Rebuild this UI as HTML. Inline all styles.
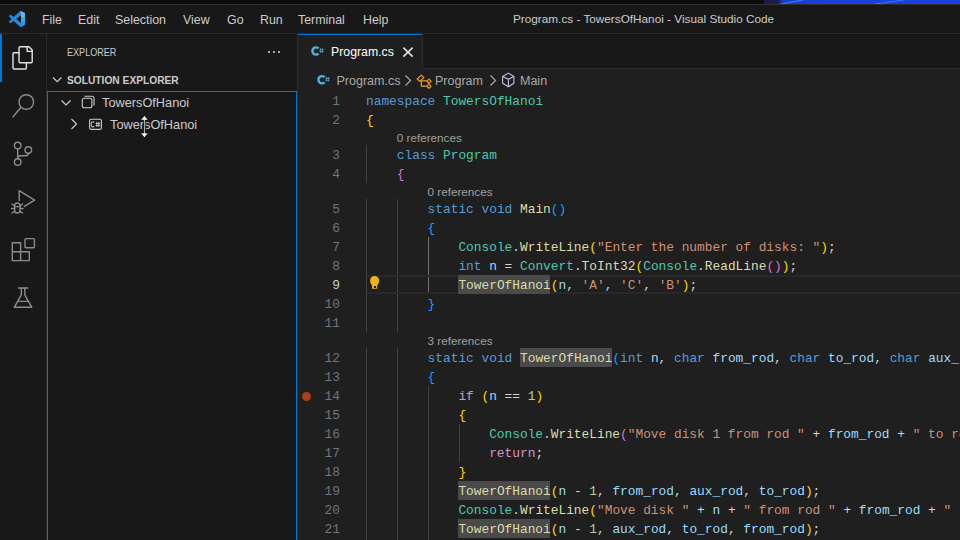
<!DOCTYPE html>
<html><head><meta charset="utf-8">
<style>
*{margin:0;padding:0;box-sizing:border-box}
html,body{width:960px;height:540px;overflow:hidden;background:#181818;font-family:"Liberation Sans",sans-serif}
.a{position:absolute}
.menu{top:13px;font-size:12.4px;color:#cccccc;white-space:pre;line-height:14px}
.code{font-family:"Liberation Mono",monospace;font-size:12.83px;white-space:pre;line-height:19px;height:19px;left:366px;color:#d4d4d4}
.ln{font-family:"Liberation Mono",monospace;font-size:12.83px;white-space:pre;line-height:19px;height:19px;left:300px;width:40px;text-align:right;color:#6e7681}
.ln.act{color:#cccccc}
.cl{font-size:11.7px;color:#a0a0a0;white-space:pre;line-height:16px;height:16px}
.k{color:#569cd6}.t{color:#4ec9b0}.f{color:#dcdcaa}.s{color:#ce9178}.v{color:#9cdcfe}.c{color:#cf98cb}.n{color:#b5cea8}
.b1{color:#ffd700}.b2{color:#da70d6}.b3{color:#179fff}
.hl{background:#4a4a4a}
.ig{width:1px;background:#404040}
.iga{width:1px;background:#707070}
.ui{font-size:12.5px;color:#a9a9a9;white-space:pre;line-height:16px}
</style></head><body>
<!-- desktop strip -->
<div class="a" style="left:0;top:0;width:960px;height:4px;background:#0b0d0b"></div>
<div class="a" style="left:764px;top:0;width:196px;height:4px;background:linear-gradient(90deg,#1c1c4a 0,#1c1c50 7%,#1b3cd8 10%,#1c40e0 100%)"></div>
<svg class="a" style="left:764px;top:0" width="196" height="4"><path d="M15 4 L36 0 L41 0 L20 4Z" fill="#3a8ee8"/><path d="M109 4 L137 0 L142 0 L114 4Z" fill="#3a8ee8"/></svg>
<div class="a" style="left:0;top:4px;width:960px;height:1px;background:#303030"></div>
<!-- title bar -->
<div class="a" style="left:0;top:33px;width:960px;height:1px;background:#2b2b2b"></div>
<svg class="a" style="left:9px;top:11px" width="16" height="16" viewBox="0 0 100 100">
<path d="M96.46 10.8 L75.86 0.9 C73.47 -0.25 70.62 0.24 68.75 2.11 L29.36 38.04 L12.2 25.01 C10.6 23.8 8.37 23.9 6.88 25.25 L1.37 30.26 C-0.44 31.91 -0.44 34.76 1.37 36.41 L16.25 50 L1.37 63.59 C-0.44 65.24 -0.44 68.09 1.37 69.74 L6.88 74.75 C8.37 76.1 10.6 76.2 12.2 74.99 L29.36 61.96 L68.75 97.89 C70.62 99.76 73.47 100.25 75.86 99.1 L96.46 89.2 C98.62 88.16 100 85.97 100 83.57 V16.43 C100 14.03 98.62 11.84 96.46 10.8 Z M75.02 72.7 L45.1 50 L75.02 27.3 Z" fill="#2a86d8" fill-rule="evenodd"/>
<defs><linearGradient id="lg" x1="0" y1="0" x2="0" y2="1"><stop offset="0" stop-color="#62b6f2"/><stop offset="0.38" stop-color="#62b6f2"/><stop offset="0.40" stop-color="#3aa6de"/><stop offset="0.66" stop-color="#3aa6de"/><stop offset="0.68" stop-color="#2e90e4"/><stop offset="1" stop-color="#2e90e4"/></linearGradient></defs>
<path d="M68.75 2.11 C70.62 0.24 73.47 -0.25 75.86 0.9 L96.46 10.8 C98.62 11.84 100 14.03 100 16.43 V83.57 C100 85.97 98.62 88.16 96.46 89.2 L75.86 99.1 C73.47 100.25 70.62 99.76 68.75 97.89 L75.02 92 V8 Z" fill="url(#lg)"/>
</svg>
<div class="a menu" style="left:42px">File</div>
<div class="a menu" style="left:78px">Edit</div>
<div class="a menu" style="left:115px">Selection</div>
<div class="a menu" style="left:183px">View</div>
<div class="a menu" style="left:227px">Go</div>
<div class="a menu" style="left:260px">Run</div>
<div class="a menu" style="left:298px">Terminal</div>
<div class="a menu" style="left:363px">Help</div>
<div class="a menu" style="left:513px;top:12px;font-size:11.77px">Program.cs - TowersOfHanoi - Visual Studio Code</div>

<!-- activity bar -->
<div class="a" style="left:46px;top:34px;width:1px;height:506px;background:#2b2b2b"></div>
<div class="a" style="left:0;top:34px;width:2px;height:48px;background:#0078d4"></div>
<svg class="a" style="left:0;top:0" width="46" height="540" fill="none" stroke-linejoin="round" stroke-linecap="round">
 <!-- explorer -->
 <g stroke="#e2e2e2" stroke-width="1.4">
  <path d="M20 46.8 H29 L32.2 50 V61.8 Q32.2 62.8 31.2 62.8 H20 Q19 62.8 19 61.8 V47.8 Q19 46.8 20 46.8 Z"/>
  <path d="M27.2 46.8 V51.4 H32.2"/>
  <path d="M19 52.8 H14 Q13 52.8 13 53.8 V68 Q13 69 14 69 H25.4 Q26.4 69 26.4 68 V62.8"/>
 </g>
 <g stroke="#8c8c8c" stroke-width="1.4">
  <!-- search -->
  <circle cx="26.3" cy="102" r="7.3"/>
  <path d="M20.8 107.5 L13 116.8"/>
  <!-- source control -->
  <circle cx="17.7" cy="145.5" r="3.3"/>
  <circle cx="28.3" cy="150" r="3.3"/>
  <circle cx="17.7" cy="162" r="3.3"/>
  <path d="M17.7 148.8 V158.7"/>
  <path d="M28.3 153.3 Q28.3 155.8 25.5 155.8 H20.5 Q17.7 155.8 17.7 158"/>
  <!-- debug -->
  <path d="M19.2 200.5 V190.6 L34.6 200.2 L24.4 206.4"/>
  <path d="M14.6 205.8 Q14.6 203 17.3 203 Q20 203 20 205.8 V210.2 Q20 213 17.3 213 Q14.6 213 14.6 210.2 Z"/>
  <path d="M14.6 206.6 H20 M12 204 L14.3 205.6 M22.6 204 L20.3 205.6 M11.5 208.5 H14.6 M20 208.5 H23.1 M12 213 L14.5 211.3 M22.6 213 L20.1 211.3"/>
  <!-- extensions -->
  <path d="M12.3 242.8 H20.6 V251.8 H29.3 V260.6 H12.3 Z M12.3 251.8 H20.6 V260.6"/>
  <rect x="25" y="238.6" width="9.4" height="9.2" rx="1"/>
  <!-- testing -->
  <path d="M18.5 288 H27.8 M21.3 288.2 V294.8 L14.3 307.3 H31.8 L24.8 294.8 V288.2 M17.5 301.4 H28.6"/>
 </g>
</svg>

<!-- sidebar -->
<div class="a" style="left:297px;top:34px;width:1px;height:506px;background:#2b2b2b"></div>
<div class="a" style="left:67px;top:45px;font-size:11px;color:#cccccc;white-space:pre;line-height:14px;transform:scaleX(0.825);transform-origin:0 0">EXPLORER</div>
<svg class="a" style="left:262px;top:48px" width="24" height="8"><circle cx="7" cy="4" r="1.1" fill="#cccccc"/><circle cx="12" cy="4" r="1.1" fill="#cccccc"/><circle cx="17" cy="4" r="1.1" fill="#cccccc"/></svg>
<svg class="a" style="left:52px;top:74px" width="12" height="12" fill="none" stroke="#cccccc" stroke-width="1.2"><path d="M1 3.5 L5.2 7.7 L9.4 3.5"/></svg>
<div class="a" style="left:67px;top:73px;font-size:11px;font-weight:bold;color:#cccccc;white-space:pre;line-height:14px;transform:scaleX(0.928);transform-origin:0 0">SOLUTION EXPLORER</div>
<div class="a" style="left:47px;top:91px;width:250px;height:460px;border:1px solid #0078d4"></div>
<svg class="a" style="left:58px;top:96px" width="60" height="40" fill="none" stroke="#cccccc" stroke-width="1.2">
 <path d="M3.5 4.5 L8 9 L12.5 4.5"/>
 <path d="M13.5 23 L18.5 28 L13.5 33"/>
</svg>
<svg class="a" style="left:80px;top:94px" width="30" height="40" fill="none" stroke="#cccccc" stroke-width="1.1">
 <rect x="2.3" y="4.3" width="9.6" height="9.4" rx="2"/>
 <path d="M4.5 2.3 H12 Q14 2.3 14 4.3 V11.5"/>
 <rect x="9.6" y="25.2" width="11.8" height="10.2" rx="1.5"/>
</svg>
<svg class="a" style="left:88px;top:118px" width="16" height="14" fill="none" stroke="#cccccc" stroke-width="1.05"><path d="M6.3 4.4 A2 2.6 0 1 0 6.3 8.4"/><path d="M8.8 3.8 V9 M10.8 3.8 V9 M7.6 5.5 H12.2 M7.6 7.4 H12.2" stroke-width="0.9"/></svg>
<div class="a" style="left:102px;top:95px;font-size:12.75px;color:#cccccc;white-space:pre;line-height:16px">TowersOfHanoi</div>
<div class="a" style="left:110px;top:117px;font-size:12.75px;color:#cccccc;white-space:pre;line-height:16px">TowersOfHanoi</div>

<!-- editor -->
<div class="a" style="left:298px;top:34px;width:662px;height:35px;background:#181818"></div>
<div class="a" style="left:298px;top:69px;width:662px;height:471px;background:#1f1f1f"></div>
<div class="a" style="left:423px;top:68px;width:537px;height:1px;background:#2b2b2b"></div>
<div class="a" style="left:298px;top:34px;width:124px;height:35px;background:#1f1f1f;border-top:1px solid #0078d4"></div>
<div class="a" style="left:422px;top:34px;width:1px;height:35px;background:#2b2b2b"></div>
<svg class="a" style="left:306px;top:41px" width="24" height="20" fill="none" stroke="#4db0d8"><path d="M12.55 7.45 A3.6 3.6 0 1 0 12.55 12.55" stroke-width="2.5"/><path d="M14.3 7.3 V11.8 M16.3 7.3 V11.8 M13.6 8.6 H17.7 M13.6 10.6 H17.7" stroke-width="0.8"/></svg>
<div class="a" style="left:331px;top:44px;font-size:12.3px;color:#ffffff;white-space:pre;line-height:16px">Program.cs</div>
<svg class="a" style="left:400px;top:44px" width="16" height="16" fill="none" stroke="#e6e6e6" stroke-width="1.5"><path d="M3.3 3.6 L12.7 12.6 M12.7 3.6 L3.3 12.6"/></svg>

<!-- breadcrumbs -->
<svg class="a" style="left:312px;top:70px" width="24" height="20" fill="none" stroke="#4db0d8"><path d="M12.55 7.2 A3.6 3.6 0 1 0 12.55 12.3" stroke-width="2.5"/><path d="M14.3 7 V11.5 M16.3 7 V11.5 M13.6 8.3 H17.7 M13.6 10.3 H17.7" stroke-width="0.8"/></svg>
<div class="a ui" style="left:336.5px;top:73px">Program.cs</div>
<svg class="a" style="left:400px;top:72px" width="160" height="18" fill="none" stroke-width="1.2">
 <path d="M5.5 3.5 L10.5 8.5 L5.5 13.5" stroke="#a9a9a9"/>
 <path d="M90.5 3.5 L95.5 8.5 L90.5 13.5" stroke="#a9a9a9"/>
 <g stroke="#ee9d28" stroke-width="1.2" stroke-linejoin="round" fill="none">
  <path d="M17.2 7 L21.3 3.1 L23.9 5.6 L19.8 9.4 Z"/>
  <path d="M29 7.2 L31.1 9.3 L29 11.4 L26.9 9.3 Z"/>
  <path d="M28.9 12.2 L31 14.3 L28.9 16.4 L26.8 14.3 Z"/>
  <path d="M21.4 8.5 V14.1 H26.8 M21.4 8.9 H26.9"/>
 </g>
 <g stroke="#cbc0e2" stroke-width="1.1" stroke-linejoin="round" fill="none">
  <path d="M108.4 1.1 L113.9 4.5 V11.3 L108.4 14.7 L102.6 11.3 V4.5 Z"/>
  <path d="M102.6 4.5 L108.4 7.3 L113.9 4.5 M108.4 7.3 V14.7"/>
 </g>
</svg>
<div class="a ui" style="left:435px;top:73px">Program</div>
<div class="a ui" style="left:520px;top:73px">Main</div>

<!-- indent guides -->
<div class="a ig" style="left:366px;top:145px;height:38px"></div>
<div class="a ig" style="left:366px;top:199px;height:133px"></div>
<div class="a ig" style="left:366px;top:348px;height:192px"></div>
<div class="a ig" style="left:397px;top:199px;height:133px"></div>
<div class="a ig" style="left:397px;top:348px;height:192px"></div>
<div class="a iga" style="left:428px;top:237px;height:57px"></div>
<div class="a ig" style="left:428px;top:386px;height:154px"></div>
<div class="a ig" style="left:459px;top:424px;height:38px"></div>

<!-- current line border -->
<div class="a" style="left:367px;top:275px;width:593px;height:19px;border-top:2px solid #282828;border-bottom:2px solid #282828"></div>
<!-- word highlights -->
<div class="a hl" style="left:458px;top:275px;width:92.4px;height:19px"></div>
<div class="a hl" style="left:520px;top:348px;width:92.4px;height:19px"></div>
<div class="a hl" style="left:458px;top:481px;width:92.4px;height:19px"></div>
<div class="a hl" style="left:458px;top:519px;width:92.4px;height:19px"></div>
<!-- lightbulb -->
<svg class="a" style="left:368px;top:275px" width="14" height="16"><path d="M4 13.8 V10.4 Q2 8.8 2 5.6 A4.6 4.6 0 0 1 11.2 5.6 Q11.2 8.8 9.2 10.4 V13.8 Z" fill="#ecb11c"/><rect x="6" y="11" width="2" height="2" fill="#1a1a1a"/></svg>
<!-- breakpoint -->
<div class="a" style="left:302px;top:391.5px;width:9px;height:9px;border-radius:50%;background:#b03c1e"></div>
<div class="a ln" style="top:92px">1</div>
<div class="a code" style="top:92px"><span class="k">namespace</span> <span class="t">TowersOfHanoi</span></div>
<div class="a ln" style="top:111px">2</div>
<div class="a code" style="top:111px"><span class="b1">{</span></div>
<div class="a ln" style="top:146px">3</div>
<div class="a code" style="top:146px">    <span class="k">class</span> <span class="t">Program</span></div>
<div class="a ln" style="top:165px">4</div>
<div class="a code" style="top:165px">    <span class="b2">{</span></div>
<div class="a ln" style="top:200px">5</div>
<div class="a code" style="top:200px">        <span class="k">static</span> <span class="k">void</span> <span class="f">Main</span><span class="b3">()</span></div>
<div class="a ln" style="top:219px">6</div>
<div class="a code" style="top:219px">        <span class="b3">{</span></div>
<div class="a ln" style="top:238px">7</div>
<div class="a code" style="top:238px">            <span class="t">Console</span>.<span class="f">WriteLine</span><span class="b1">(</span><span class="s">"Enter the number of disks: "</span><span class="b1">)</span>;</div>
<div class="a ln" style="top:257px">8</div>
<div class="a code" style="top:257px">            <span class="k">int</span> <span class="v">n</span> = <span class="t">Convert</span>.<span class="f">ToInt32</span><span class="b1">(</span><span class="t">Console</span>.<span class="f">ReadLine</span><span class="b2">()</span><span class="b1">)</span>;</div>
<div class="a ln act" style="top:276px">9</div>
<div class="a code" style="top:276px">            <span class="f">TowerOfHanoi</span><span class="b1">(</span><span class="v">n</span>, <span class="s">'A'</span>, <span class="s">'C'</span>, <span class="s">'B'</span><span class="b1">)</span>;</div>
<div class="a ln" style="top:295px">10</div>
<div class="a code" style="top:295px">        <span class="b3">}</span></div>
<div class="a ln" style="top:314px">11</div>
<div class="a code" style="top:314px"></div>
<div class="a ln" style="top:349px">12</div>
<div class="a code" style="top:349px">        <span class="k">static</span> <span class="k">void</span> <span class="f">TowerOfHanoi</span><span class="b3">(</span><span class="k">int</span> <span class="v">n</span>, <span class="k">char</span> <span class="v">from_rod</span>, <span class="k">char</span> <span class="v">to_rod</span>, <span class="k">char</span> <span class="v">aux_rod</span><span class="b3">)</span></div>
<div class="a ln" style="top:368px">13</div>
<div class="a code" style="top:368px">        <span class="b3">{</span></div>
<div class="a ln" style="top:387px">14</div>
<div class="a code" style="top:387px">            <span class="c">if</span> <span class="b1">(</span><span class="v">n</span> == <span class="n">1</span><span class="b1">)</span></div>
<div class="a ln" style="top:406px">15</div>
<div class="a code" style="top:406px">            <span class="b1">{</span></div>
<div class="a ln" style="top:425px">16</div>
<div class="a code" style="top:425px">                <span class="t">Console</span>.<span class="f">WriteLine</span><span class="b2">(</span><span class="s">"Move disk 1 from rod "</span> + <span class="v">from_rod</span> + <span class="s">" to rod "</span> + <span class="v">to_rod</span><span class="b2">)</span>;</div>
<div class="a ln" style="top:444px">17</div>
<div class="a code" style="top:444px">                <span class="c">return</span>;</div>
<div class="a ln" style="top:463px">18</div>
<div class="a code" style="top:463px">            <span class="b1">}</span></div>
<div class="a ln" style="top:482px">19</div>
<div class="a code" style="top:482px">            <span class="f">TowerOfHanoi</span><span class="b1">(</span><span class="v">n</span> - <span class="n">1</span>, <span class="v">from_rod</span>, <span class="v">aux_rod</span>, <span class="v">to_rod</span><span class="b1">)</span>;</div>
<div class="a ln" style="top:501px">20</div>
<div class="a code" style="top:501px">            <span class="t">Console</span>.<span class="f">WriteLine</span><span class="b1">(</span><span class="s">"Move disk "</span> + <span class="v">n</span> + <span class="s">" from rod "</span> + <span class="v">from_rod</span> + <span class="s">" to rod "</span> + <span class="v">to_rod</span><span class="b1">)</span>;</div>
<div class="a ln" style="top:520px">21</div>
<div class="a code" style="top:520px">            <span class="f">TowerOfHanoi</span><span class="b1">(</span><span class="v">n</span> - <span class="n">1</span>, <span class="v">aux_rod</span>, <span class="v">to_rod</span>, <span class="v">from_rod</span><span class="b1">)</span>;</div>
<div class="a cl" style="top:129.5px;left:396.8px">0 references</div>
<div class="a cl" style="top:183.5px;left:427.6px">0 references</div>
<div class="a cl" style="top:332.5px;left:427.6px">3 references</div>

<!-- cursor -->
<svg class="a" style="left:136px;top:112px" width="18" height="30">
 <path d="M8.4 3.4 L4.3 8.3 H7.6 V20.9 H4.3 L8.4 25.8 L12.5 20.9 H9.2 V8.3 H12.5 Z" fill="#f2f2ea" stroke="#000" stroke-width="0.8" stroke-linejoin="round"/>
</svg>
</body></html>
